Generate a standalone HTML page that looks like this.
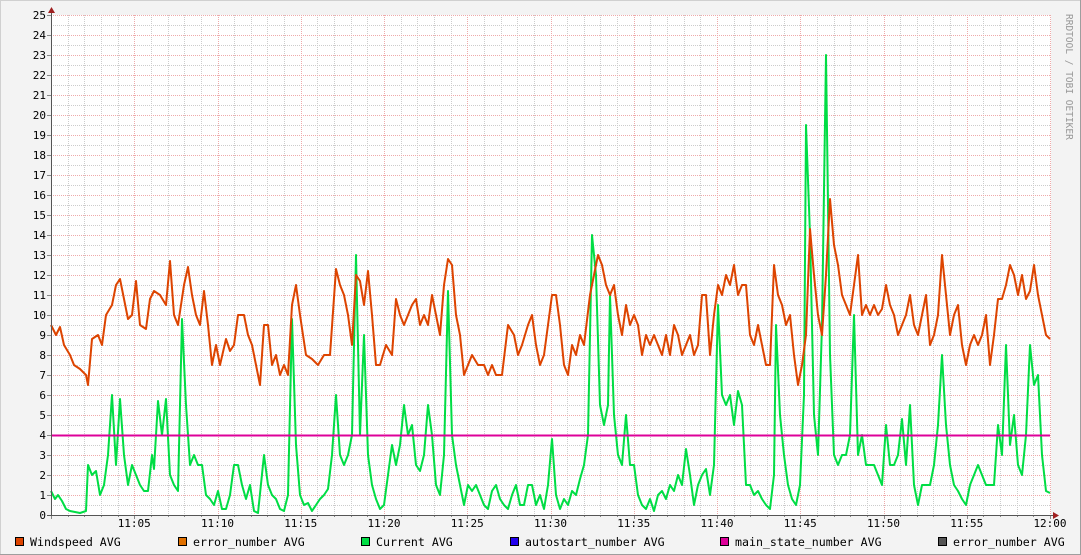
<!DOCTYPE html>
<html><head><meta charset="utf-8"><style>
body{margin:0;background:#f3f3f3;width:1081px;height:555px;overflow:hidden}
svg{display:block}
.l{font-family:"DejaVu Sans Mono","Liberation Mono",monospace;font-size:11.6px;fill:#000}
.a{font-family:"DejaVu Sans Mono","Liberation Mono",monospace;font-size:11px;fill:#000}
</style></head><body>
<svg width="1081" height="555" viewBox="0 0 1081 555" xmlns="http://www.w3.org/2000/svg">
<rect x="0" y="0" width="1081" height="555" fill="#f3f3f3"/>
<path d="M0.5 555V0.5H1081" stroke="#d0d0d0" fill="none"/>
<path d="M1080.5 0V554.5H0" stroke="#9e9e9e" fill="none"/>
<rect x="51" y="15" width="1000" height="500" fill="#fff"/>
<g id="grid"></g>
<text x="1066" y="14" transform="rotate(90 1066 14)" font-family="DejaVu Sans Mono,monospace" font-size="9.5" fill="#999">RRDTOOL / TOBI OETIKER</text>
<g id="lines"></g>
<g id="axes"></g>
<rect x="15.5" y="537.5" width="8" height="8" fill="#dd4400" stroke="#000"/><text class="l" x="30" y="546">Windspeed AVG</text>
<rect x="178.5" y="537.5" width="8" height="8" fill="#e07000" stroke="#000"/><text class="l" x="193" y="546">error_number AVG</text>
<rect x="361.5" y="537.5" width="8" height="8" fill="#00dd44" stroke="#000"/><text class="l" x="376" y="546">Current AVG</text>
<rect x="510.5" y="537.5" width="8" height="8" fill="#2200ee" stroke="#000"/><text class="l" x="525" y="546">autostart_number AVG</text>
<rect x="720.5" y="537.5" width="8" height="8" fill="#dd0099" stroke="#000"/><text class="l" x="735" y="546">main_state_number AVG</text>
<rect x="938.5" y="537.5" width="8" height="8" fill="#555" stroke="#000"/><text class="l" x="953" y="546">error_number AVG</text>
</svg>
<script>
var NS="http://www.w3.org/2000/svg";
function el(p,t,a){var e=document.createElementNS(NS,t);for(var k in a)e.setAttribute(k,a[k]);p.appendChild(e);return e;}
var g=document.getElementById('grid'),ax=document.getElementById('axes'),ln=document.getElementById('lines');
for(var i=0;i<=50;i++){var y=515-i*10+0.5;if(i%2==0)continue;el(g,'line',{x1:51,x2:1051,y1:y,y2:y,stroke:'#ccc','stroke-dasharray':'1,1'});}
for(var k=1;k<60;k++){var x=Math.round(51+k*999/60)+0.5;if(k%5==0)continue;el(g,'line',{x1:x,x2:x,y1:15,y2:515,stroke:'#ccc','stroke-dasharray':'1,1'});}
for(var i=1;i<=25;i++){var y=515-i*20+0.5;el(g,'line',{x1:51,x2:1051,y1:y,y2:y,stroke:'#eaa','stroke-dasharray':'1,1'});}
for(var k=5;k<=60;k+=5){var x=Math.round(51+k*999/60)+0.5;el(g,'line',{x1:x,x2:x,y1:15,y2:515,stroke:'#eaa','stroke-dasharray':'1,1'});}
for(var i=0;i<=25;i++){var y=515-i*20;el(ax,'line',{x1:47,x2:51,y1:y+0.5,y2:y+0.5,stroke:'#888'});var t=el(ax,'text',{x:46,y:y+4,'text-anchor':'end','class':'a'});t.textContent=i;}
for(var k=0;k<=60;k++){var x=Math.round(51+k*999/60)+0.5;el(ax,'line',{x1:x,x2:x,y1:515,y2:k%5?517:519,stroke:'#888'});}
var lab=["11:05","11:10","11:15","11:20","11:25","11:30","11:35","11:40","11:45","11:50","11:55","12:00"];
for(var k=1;k<=12;k++){var x=51+k*5*999/60;var t=el(ax,'text',{x:x,y:527,'text-anchor':'middle','class':'a'});t.textContent=lab[k-1];}
var o=[51,9.5,56,9,60,9.4,64,8.5,70,8,74,7.5,80,7.3,86,7,88,6.5,92,8.8,98,9,102,8.5,106,10,112,10.5,116,11.5,120,11.8,124,10.8,128,9.8,132,10,136,11.7,140,9.5,146,9.3,150,10.8,154,11.2,160,11,166,10.5,170,12.7,174,10,178,9.5,184,11.5,188,12.4,192,11,196,10,200,9.5,204,11.2,208,9.5,212,7.5,216,8.5,220,7.5,226,8.8,230,8.2,234,8.5,238,10,244,10,248,9,252,8.5,256,7.5,260,6.5,264,9.5,268,9.5,272,7.5,276,8,280,7,284,7.5,288,7,292,10.5,296,11.5,300,10,306,8,312,7.8,318,7.5,324,8,330,8,336,12.3,340,11.5,344,11,348,10,352,8.5,356,12,360,11.7,364,10.5,368,12.2,372,10,376,7.5,380,7.5,386,8.5,392,8,396,10.8,400,10,404,9.5,408,10,412,10.5,416,10.8,420,9.5,424,10,428,9.5,432,11,436,10,440,9,444,11.5,448,12.8,452,12.5,456,10,460,9,464,7,468,7.5,472,8,478,7.5,484,7.5,488,7,492,7.5,496,7,502,7,508,9.5,514,9,518,8,522,8.5,528,9.5,532,10,536,8.5,540,7.5,544,8,548,9.5,552,11,556,11,560,9.5,564,7.5,568,7,572,8.5,576,8,580,9,584,8.5,590,11,594,12,598,13,602,12.5,606,11.5,610,11,614,11.5,618,10,622,9,626,10.5,630,9.5,634,10,638,9.5,642,8,646,9,650,8.5,654,9,658,8.5,662,8,666,9,670,8,674,9.5,678,9,682,8,686,8.5,690,9,694,8,698,8.5,702,11,706,11,710,8,714,10,718,11.5,722,11,726,12,730,11.5,734,12.5,738,11,742,11.5,746,11.5,750,9,754,8.5,758,9.5,762,8.5,766,7.5,770,7.5,774,12.5,778,11,782,10.5,786,9.5,790,10,794,8,798,6.5,802,7.5,806,9,810,14.3,814,12,818,10,822,9,826,12,830,15.8,834,13.5,838,12.5,842,11,846,10.5,850,10,854,11.5,858,13,862,10,866,10.5,870,10,874,10.5,878,10,882,10.3,886,11.5,890,10.5,894,10,898,9,902,9.5,906,10,910,11,914,9.5,918,9,922,10,926,11,930,8.5,934,9,938,10,942,13,946,11,950,9,954,10,958,10.5,962,8.5,966,7.5,970,8.5,974,9,978,8.5,982,9,986,10,990,7.5,994,9,998,10.8,1002,10.8,1006,11.5,1010,12.5,1014,12,1018,11,1022,12,1026,10.8,1030,11.2,1034,12.5,1038,11,1042,10,1046,9,1050,8.8];
var c=[51,1.2,55,0.8,58,1,62,0.7,66,0.3,70,0.2,80,0.1,86,0.2,88,2.5,92,2,96,2.2,100,1,104,1.5,108,3,112,6,116,2.5,120,5.8,124,3,128,1.5,132,2.5,136,2,140,1.5,144,1.2,148,1.2,152,3,154,2.3,158,5.7,162,4,166,5.8,170,2,174,1.5,178,1.2,182,9.8,186,5.5,190,2.5,194,3,198,2.5,202,2.5,206,1,210,0.8,214,0.5,218,1.2,222,0.3,226,0.3,230,1,234,2.5,238,2.5,242,1.5,246,0.8,250,1.5,254,0.2,258,0.1,264,3,268,1.5,272,1,276,0.8,280,0.3,284,0.2,288,1,292,9.8,296,3.5,300,1,304,0.5,308,0.6,312,0.2,316,0.5,320,0.8,324,1,328,1.3,332,3,336,6,340,3,344,2.5,348,3,352,4,356,13,360,4,364,9,368,3,372,1.5,376,0.8,380,0.3,384,0.5,388,2,392,3.5,396,2.5,400,3.5,404,5.5,408,4,412,4.5,416,2.5,420,2.2,424,3,428,5.5,432,4,436,1.5,440,1,444,3,448,11.2,452,4,456,2.5,460,1.5,464,0.5,468,1.5,472,1.2,476,1.5,480,1,484,0.5,488,0.3,492,1.2,496,1.5,500,0.8,504,0.5,508,0.3,512,1,516,1.5,520,0.5,524,0.5,528,1.5,532,1.5,536,0.5,540,1,544,0.3,548,1.5,552,3.8,556,1,560,0.3,564,0.8,568,0.5,572,1.2,576,1,580,1.8,584,2.5,588,4,592,14,596,12,600,5.5,604,4.5,608,5.5,610,11,614,5,618,3,622,2.5,626,5,630,2.5,634,2.5,638,1,642,0.5,646,0.3,650,0.8,654,0.2,658,1,662,1.2,666,0.8,670,1.5,674,1.2,678,2,682,1.5,686,3.3,690,2,694,0.5,698,1.5,702,2,706,2.3,710,1,714,2.5,718,10.5,722,6,726,5.5,730,6,734,4.5,738,6.2,742,5.5,746,1.5,750,1.5,754,1,758,1.2,762,0.8,766,0.5,770,0.3,774,2,776,9.5,780,5,784,3,788,1.5,792,0.8,796,0.5,800,1.5,804,6,806,19.5,810,14,814,5,818,3,822,9.5,826,23,830,8,834,3,838,2.5,842,3,846,3,850,4,854,10,858,3,862,4,866,2.5,870,2.5,874,2.5,878,2,882,1.5,886,4.5,890,2.5,894,2.5,898,3,902,4.8,906,2.5,910,5.5,914,1.5,918,0.5,922,1.5,926,1.5,930,1.5,934,2.5,938,4.5,942,8,946,4.5,950,2.5,954,1.5,958,1.2,962,0.8,966,0.5,970,1.5,974,2,978,2.5,982,2,986,1.5,990,1.5,994,1.5,998,4.5,1002,3,1006,8.5,1010,3.5,1014,5,1018,2.5,1022,2,1026,4,1030,8.5,1034,6.5,1038,7,1042,3,1046,1.2,1050,1.1];
function pts(a){var s=[];for(var i=0;i<a.length;i+=2)s.push(a[i]+','+(515-a[i+1]*20).toFixed(1));return s.join(' ');}
el(ln,'polyline',{points:pts(c),fill:'none',stroke:'#00dd44','stroke-width':2,'stroke-linejoin':'round'});
el(ln,'polyline',{points:pts(o),fill:'none',stroke:'#dd4400','stroke-width':2,'stroke-linejoin':'round'});
el(ln,'line',{x1:51,x2:1050,y1:435.5,y2:435.5,stroke:'#dd0099','stroke-width':2});
el(ax,'line',{x1:51.5,x2:51.5,y1:10,y2:516,stroke:'#555'});
el(ax,'line',{x1:47,x2:1056,y1:515.5,y2:515.5,stroke:'#555'});
el(ax,'path',{d:'M48 13L51.5 7L55 13Z',fill:'#a02020'});
el(ax,'path',{d:'M1053 512L1059 515.5L1053 519Z',fill:'#a02020'});
</script>
</body></html>
